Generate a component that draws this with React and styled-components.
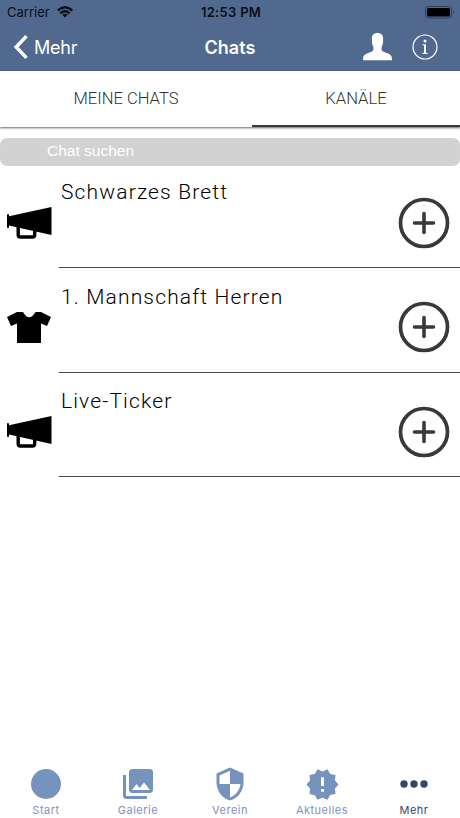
import React from "react";
import styled, { createGlobalStyle } from "styled-components";
import { MdPhotoLibrary, MdSecurity, MdNewReleases } from "react-icons/md";

const channels = [
  { id: 1, name: "Schwarzes Brett", icon: "megaphone" },
  { id: 2, name: "1. Mannschaft Herren", icon: "shirt" },
  { id: 3, name: "Live-Ticker", icon: "megaphone" },
];

const Megaphone = () => (
  <svg width="45" height="32" viewBox="0 0 45 32">
    <path d="M0 7.300h2v2L44.500 0v28L2 18.500v2.200H0z" />
    <path
      d="M11.200 18v9.800q0 2.200 2.200 2.200h12.100q2.200 0 2.200-2.200V23"
      fill="none"
      stroke="#000"
      strokeWidth="3.400"
    />
  </svg>
);

const Shirt = () => (
  <svg width="44" height="31" viewBox="0 0 44 31">
    <path d="M16 0Q22 10.500 28.500 0H34L44 5l-4 9-6-2.500V31H10V11.500L4 14 0 5 10 0z" />
  </svg>
);

const Wifi = () => (
  <svg width="16" height="12" viewBox="0 0 16 12">
    <g fill="none" stroke="#080d16" strokeWidth="2.400">
      <path d="M.8 4.500Q8-2 15.200 4.500" />
      <path d="M3.400 7.300Q8 3.200 12.600 7.300" />
    </g>
    <path d="M5.400 8.800Q8 6.600 10.600 8.800L8 11.400z" fill="#080d16" />
  </svg>
);

const Battery = () => (
  <svg width="30" height="13" viewBox="0 0 30 13">
    <rect x=".5" y=".5" width="26" height="11.500" rx="3" fill="none" stroke="#2d3c55" />
    <rect x="2" y="2" width="23" height="8.500" rx="1.500" />
    <path d="M28 4.200q1.500 1.800 0 4z" fill="#1d2940" />
  </svg>
);

const Person = () => (
  <svg width="29" height="28" viewBox="0 0 29 28">
    <path
      d="M14.500 0C18.500 0 20.300 2.200 20.100 6L20 9.500C20 12 18.500 13 18.500 15.500C18.500 18 19.500 18.300 23 19.800C27.500 21.600 29 22 29 27.300H0C0 22 1.500 21.600 6 19.800C9.500 18.300 10.500 18 10.500 15.500C10.500 13 9 12 9 9.500L8.900 6C8.700 2.200 10.500 0 14.500 0z"
      fill="#fff"
    />
  </svg>
);

const Info = () => (
  <svg width="26" height="26" viewBox="0 0 26 26">
    <circle cx="13" cy="13" r="12" fill="none" stroke="#fff" strokeWidth="1.200" />
    <circle cx="13" cy="7" r="1.500" fill="#fff" />
    <path d="M10.500 10.200H14v8.500l1.500.3v1h-5v-1l1.500-.3v-7.300l-1.500-.3z" fill="#fff" />
  </svg>
);

const tabItems = [
  {
    label: "Start",
    icon: (
      <svg width="30" height="30" viewBox="0 0 30 30">
        <circle cx="15" cy="15" r="15" />
      </svg>
    ),
  },
  { label: "Galerie", icon: <MdPhotoLibrary size={36} /> },
  { label: "Verein", icon: <MdSecurity size={36} /> },
  { label: "Aktuelles", icon: <MdNewReleases size={35} /> },
  {
    label: "Mehr",
    active: true,
    icon: (
      <svg width="28" height="8" viewBox="0 0 28 8">
        <circle cx="4" cy="4" r="3.700" />
        <circle cx="14" cy="4" r="3.700" />
        <circle cx="24" cy="4" r="3.700" />
      </svg>
    ),
  },
];

const App = () => {
  return (
    <Screen>
      <GlobalStyle />
      <Header>
        <StatusBar>
          <Carrier>
            Carrier
            <Wifi />
          </Carrier>
          <Clock>12:53 PM</Clock>
          <Power>
            <Battery />
          </Power>
        </StatusBar>
        <NavBar>
          <Back>
            <svg width="14" height="24" viewBox="0 0 14 24">
              <path d="M12.500 1.200L2.200 12l10.300 10.800" fill="none" stroke="#fff" strokeWidth="3.400" />
            </svg>
            Mehr
          </Back>
          <Title>Chats</Title>
          <Actions>
            <Person />
            <Info />
          </Actions>
        </NavBar>
      </Header>
      <Segments>
        <Segment>MEINE CHATS</Segment>
        <Segment $active>KANÄLE</Segment>
      </Segments>
      <Search placeholder="Chat suchen" />
      <List>
        {channels.map(({ id, name, icon }) => (
          <Row key={id}>
            <RowIcon>{icon === "shirt" ? <Shirt /> : <Megaphone />}</RowIcon>
            <RowBody>
              <RowName>{name}</RowName>
              <AddButton>
                <svg width="52" height="52" viewBox="0 0 52 52">
                  <g fill="none" stroke="#3a393a">
                    <circle cx="26" cy="26" r="23.500" strokeWidth="3.700" />
                    <path d="M26 16.500v19M16.500 26h19" strokeWidth="3.600" strokeLinecap="round" />
                  </g>
                </svg>
              </AddButton>
            </RowBody>
          </Row>
        ))}
      </List>
      <TabBar>
        {tabItems.map(({ label, icon, active }) => (
          <Tab key={label} $active={active}>
            <TabIcon>{icon}</TabIcon>
            {label}
          </Tab>
        ))}
      </TabBar>
    </Screen>
  );
};
export default App;

const GlobalStyle = createGlobalStyle`
  * {
    box-sizing: border-box;
  }
  body {
    margin: 0;
    background: #fff;
  }
  svg {
    display: block;
    flex-shrink: 0;
  }
`;

const Screen = styled.div`
  width: 100%;
  height: 818px;
  display: flex;
  flex-direction: column;
  background: #fff;
  font-family: Inter, sans-serif;
  overflow: hidden;
`;

const Header = styled.div`
  height: 71px;
  background: #52698f;
  border-bottom: 1px solid #4a6291;
`;

const StatusBar = styled.div`
  height: 24px;
  display: grid;
  grid-template-columns: 1fr auto 1fr;
  align-items: center;
  padding: 0 5px 0 7px;
  color: #080d16;
`;

const Carrier = styled.div`
  display: flex;
  align-items: center;
  gap: 7px;
  font-size: 13px;
`;

const Clock = styled.div`
  font-size: 13px;
  font-weight: 600;
  letter-spacing: 0.3px;
`;

const Power = styled.div`
  display: flex;
  justify-content: flex-end;
`;

const NavBar = styled.div`
  height: 46px;
  display: grid;
  grid-template-columns: 1fr auto 1fr;
  align-items: center;
  padding: 0 22px;
  color: #fff;
`;

const Back = styled.div`
  display: flex;
  align-items: center;
  gap: 6px;
  margin-left: -8px;
  font-size: 18px;
  letter-spacing: -0.2px;
`;

const Title = styled.div`
  font-size: 18px;
  font-weight: 600;
  letter-spacing: 0.1px;
`;

const Actions = styled.div`
  display: flex;
  justify-content: flex-end;
  align-items: center;
  gap: 20px;
`;

const Segments = styled.div`
  height: 56px;
  display: grid;
  grid-template-columns: 252px 1fr;
  box-shadow: 0 1px 2px rgba(0, 0, 0, 0.6);
`;

const Segment = styled.div`
  display: flex;
  justify-content: center;
  align-items: center;
  padding-top: ${({ $active }) => ($active ? "1px" : "0")};
  padding-bottom: ${({ $active }) => ($active ? "0" : "1px")};
  border-bottom: ${({ $active }) => ($active ? "2px solid #3a393a" : "none")};
  font-family: Roboto, sans-serif;
  font-size: 16.6px;
  font-weight: 300;
  color: #333;
`;

const Search = styled.input`
  width: 100%;
  height: 28px;
  margin-top: 11px;
  padding: 0 47px 2px;
  border: none;
  border-radius: 7px;
  outline: none;
  background: #d2d2d2;
  font-family: "Liberation Sans", sans-serif;
  font-size: 15.5px;
  flex-shrink: 0;

  &::placeholder {
    color: #fff;
    opacity: 1;
  }
`;

const List = styled.div`
  flex: 1;
  margin-top: -2.5px;
`;

const Row = styled.div`
  height: 104.5px;
  display: flex;
`;

const RowIcon = styled.div`
  width: 59px;
  display: flex;
  align-items: center;
  padding-left: 7px;
  padding-top: 14px;
`;

const RowBody = styled.div`
  flex: 1;
  display: flex;
  justify-content: space-between;
  align-items: flex-start;
  padding: 15.5px 10px 0 2px;
  border-bottom: 1px solid #444;
`;

const RowName = styled.div`
  font-family: Roboto, sans-serif;
  font-size: 21px;
  font-weight: 350;
  line-height: 26px;
  letter-spacing: 1.15px;
  color: #000;
`;

const AddButton = styled.div`
  padding-top: 17.5px;
`;

const TabBar = styled.div`
  height: 55px;
  display: grid;
  grid-template-columns: repeat(5, 1fr);
`;

const Tab = styled.div`
  display: flex;
  flex-direction: column;
  align-items: center;
  font-size: 11px;
  font-weight: 400;
  letter-spacing: 0.5px;
  color: ${({ $active }) => ($active ? "#3c4868" : "#7e91c0")};

  svg {
    fill: ${({ $active }) => ($active ? "#35466b" : "#7693bd")};
  }
`;

const TabIcon = styled.div`
  height: 40px;
  display: flex;
  align-items: center;
  padding-top: 2px;
`;
